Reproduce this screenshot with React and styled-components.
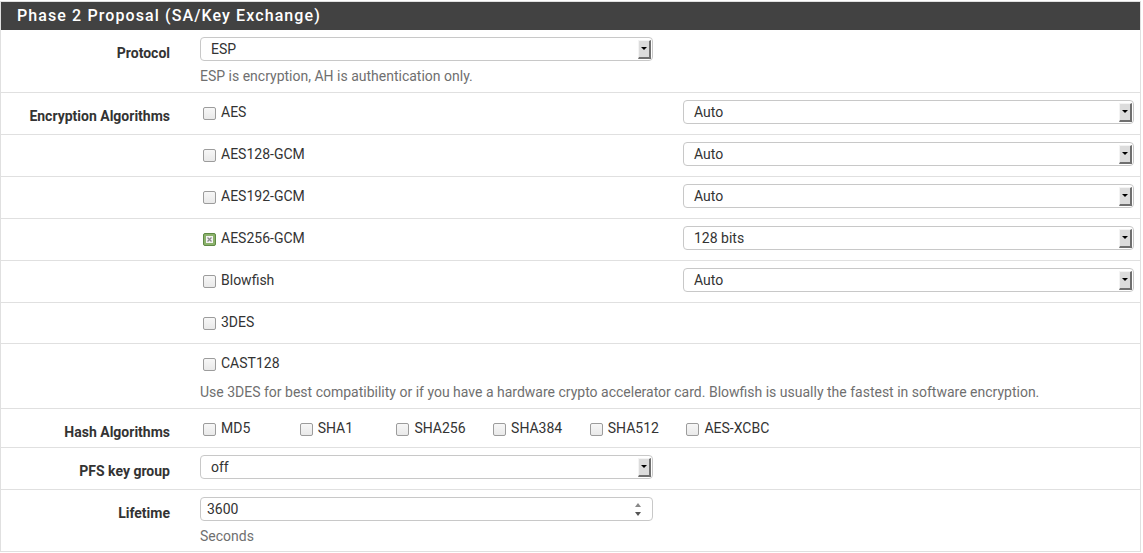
import React from 'react';
import styled, {createGlobalStyle} from 'styled-components';

const GlobalStyle = createGlobalStyle`
	body {
		margin: 0;
		background: #fff;
		font-family: Roboto, 'Liberation Sans', sans-serif;
		font-size: 14px;
		color: #212121;
	}
`;

const Panel = styled.div`
	width: 1139px;
	margin: 1px 2px 0 0;
	border: 1px solid #e0e0e0;
	background: #fff;
`;

const Heading = styled.div`
	height: 28px;
	background: #424242;
	color: #fff;
	font-size: 16px;
	font-weight: 500;
	letter-spacing: 1.1px;
	line-height: 28px;
	padding-left: 16px;
`;

const Row = styled.div`
	display: grid;
	grid-template-columns: 184px 1fr;
	border-bottom: ${p => (p.$last ? 'none' : '1px solid #e0e0e0')};
`;

const Label = styled.div`
	text-align: right;
	padding: 13px 15px 0 0;
	line-height: 20px;
	font-weight: bold;
	color: #333;
`;

const Field = styled.div`
	padding: 7px 7px ${p => p.$pb || 10}px 15px;
`;

const Split = styled.div`
	display: grid;
	grid-template-columns: 483px 450px;
	align-items: start;
`;

const Select = styled.div`
	box-sizing: border-box;
	width: ${p => p.$w}px;
	height: 24px;
	border: 1px solid #c8c8c8;
	border-radius: 4px;
	display: flex;
	align-items: center;
	justify-content: space-between;
	padding: 0 1px 0 10px;
	color: #333;
	line-height: 20px;
`;

const NumberInput = styled(Select)`
	padding-left: 6px;
`;

const ArrowButton = styled.span`
	width: 13px;
	height: 19px;
	background: #dcdcdc;
	border-right: 2px solid #6f6f6f;
	border-bottom: 2px solid #6f6f6f;
	border-top: 1px solid #f4f4f4;
	border-left: 1px solid #f4f4f4;
	display: flex;
	align-items: center;
	justify-content: center;
	box-sizing: border-box;
	&::after {
		content: '';
		border-left: 3px solid transparent;
		border-right: 3px solid transparent;
		border-top: 3px solid #000;
	}
`;

const Spinner = styled.span`
	display: flex;
	flex-direction: column;
	gap: 5px;
	margin-right: 10px;
	&::before,
	&::after {
		content: '';
		border-left: 3px solid transparent;
		border-right: 3px solid transparent;
	}
	&::before {
		border-bottom: 4px solid #888;
	}
	&::after {
		border-top: 4px solid #555;
	}
`;

const Help = styled.div`
	margin-top: ${p => p.$mt || 5}px;
	line-height: 20px;
	color: #6f6f6f;
`;

const CheckLine = styled.div`
	display: flex;
	flex-wrap: nowrap;
	min-height: 23px;
	padding-top: 2px;
	box-sizing: border-box;
`;

const CheckItem = styled.label`
	display: flex;
	align-items: flex-start;
	width: ${p => (p.$w ? `${p.$w}px` : 'auto')};
	line-height: 20px;
	color: #333;
`;

const Box = styled.span`
	box-sizing: border-box;
	width: 13px;
	height: 13px;
	margin: 5px 5px 0 3px;
	border: 1px solid #9c9c9c;
	border-radius: 2px;
	background: linear-gradient(#f7f7f7, #e9e9e9);
	display: inline-flex;
	align-items: center;
	justify-content: center;
	${p =>
		p.$on &&
		`
		background: #8bb16b;
		border-color: #5f8a45;
	`}
`;

const Check = ({label, on, w}) => (
	<CheckItem $w={w}>
		<Box $on={on}>
			{on && (
				<svg width="7" height="7" viewBox="0 0 7 7">
					<rect x="0" y="0" width="7" height="7" fill="#f4f4f4" />
					<path d="M1.5 1.5 L5.5 5.5 M5.5 1.5 L1.5 5.5" stroke="#8a8a8a" strokeWidth="1.3" />
				</svg>
			)}
		</Box>
		{label}
	</CheckItem>
);

const encryption = [
	{name: 'AES', value: 'Auto'},
	{name: 'AES128-GCM', value: 'Auto'},
	{name: 'AES192-GCM', value: 'Auto'},
	{name: 'AES256-GCM', value: '128 bits', on: true},
	{name: 'Blowfish', value: 'Auto'},
	{name: '3DES'},
];

const hashes = ['MD5', 'SHA1', 'SHA256', 'SHA384', 'SHA512', 'AES-XCBC'];

export default function App() {
	return (
		<>
			<GlobalStyle />
			<Panel>
				<Heading>Phase 2 Proposal (SA/Key Exchange)</Heading>

				<Row>
					<Label>Protocol</Label>
					<Field $pb={6}>
						<Select $w={453}>
							ESP
							<ArrowButton />
						</Select>
						<Help>ESP is encryption, AH is authentication only.</Help>
					</Field>
				</Row>

				{encryption.map((enc, i) => (
					<Row key={enc.name}>
						<Label>{i === 0 ? 'Encryption Algorithms' : ''}</Label>
						<Field>
							<Split>
								<CheckLine>
									<Check label={enc.name} on={enc.on} />
								</CheckLine>
								{enc.value ? (
									<Select $w={451}>
										{enc.value}
										<ArrowButton />
									</Select>
								) : null}
							</Split>
						</Field>
					</Row>
				))}

				<Row>
					<Label />
					<Field $pb={6}>
						<CheckLine>
							<Check label="CAST128" />
						</CheckLine>
						<Help $mt={8}>
							Use 3DES for best compatibility or if you have a hardware crypto accelerator card. Blowfish is
							usually the fastest in software encryption.
						</Help>
					</Field>
				</Row>

				<Row>
					<Label>Hash Algorithms</Label>
					<Field $pb={8}>
						<CheckLine>
							{hashes.map(h => (
								<Check key={h} label={h} w={96.7} />
							))}
						</CheckLine>
					</Field>
				</Row>

				<Row>
					<Label>PFS key group</Label>
					<Field>
						<Select $w={453}>
							off
							<ArrowButton />
						</Select>
					</Field>
				</Row>

				<Row $last>
					<Label>Lifetime</Label>
					<Field $pb={5}>
						<NumberInput $w={453}>
							3600
							<Spinner />
						</NumberInput>
						<Help>Seconds</Help>
					</Field>
				</Row>
			</Panel>
		</>
	);
}
